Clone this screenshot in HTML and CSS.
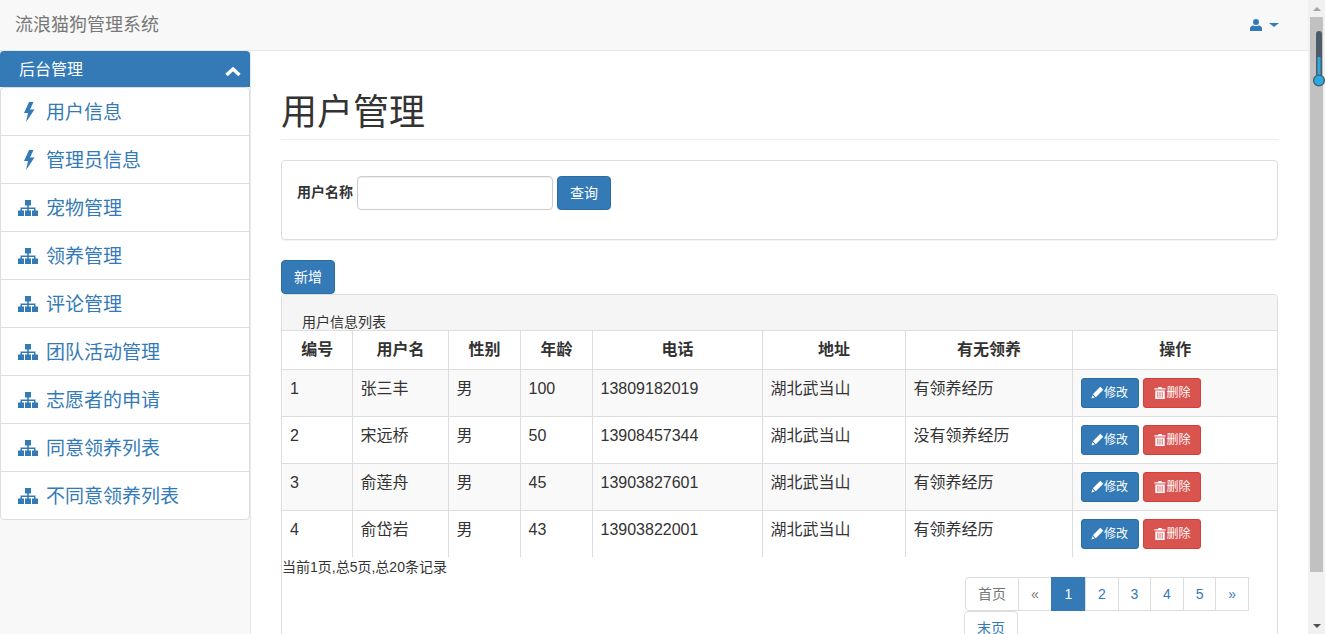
FILE: index.html
```html
<!DOCTYPE html>
<html lang="zh">
<head>
<meta charset="utf-8">
<title>流浪猫狗管理系统</title>
<link rel="stylesheet" href="styles.css">
</head>
<body>
<svg class="defs" width="0" height="0" aria-hidden="true">
  <symbol id="i-flash" viewBox="0 0 12 20"><path d="M6 0 1 11h4L3 20l8.500-12.500H7L10.500 0z"/></symbol>
  <symbol id="i-sitemap" viewBox="0 0 20 16"><path d="M7 0h6v5.500h-2.200v2H17.500V10.500H20V16h-6v-5.500h2V9H10.800v1.500H13V16H7v-5.500h2.200V9H4v1.500h2V16H0v-5.500h2.500V7.500h6.700v-2H7z"/></symbol>
  <symbol id="i-pencil" viewBox="0 0 14 14"><path d="M10 .8 13.200 4l-8 8L2 8.800z"/><path d="M.5 13.500 1.500 10l2.500 2.500z"/></symbol>
  <symbol id="i-trash" viewBox="0 0 14 14"><path d="M5 0h4v1.500h4.500V3H.5V1.500H5zM1.500 4h11v10h-11zM4 5.500V12.500h1V5.500zM6.500 5.500V12.500h1V5.500zM9 5.500V12.500h1V5.500z" fill-rule="evenodd"/></symbol>
</svg>
<div class="viewport">
  <div class="page">
    <header class="navbar">
      <a class="brand">流浪猫狗管理系统</a>
      <div class="user-menu">
        <svg class="user-icon" viewBox="0 0 12 12"><circle cx="6" cy="3" r="3"/><path d="M0 12V9.500C0 7.800 1.500 6.800 3.500 6.500 4.500 7.300 7.500 7.300 8.500 6.500 10.500 6.800 12 7.800 12 9.500V12z"/></svg>
        <span class="caret"></span>
      </div>
    </header>
    <div class="body-row">
      <aside class="sidebar">
        <div class="side-head">
          <span>后台管理</span>
          <svg class="chevron" viewBox="0 0 16 10"><path d="M1.500 8 8 2l6.500 6" fill="none" stroke="#fff" stroke-width="3.400"/></svg>
        </div>
        <ul class="side-list">
          <li><svg class="ic-flash"><use href="#i-flash"/></svg><a>用户信息</a></li>
          <li><svg class="ic-flash"><use href="#i-flash"/></svg><a>管理员信息</a></li>
          <li><svg class="ic-map"><use href="#i-sitemap"/></svg><a>宠物管理</a></li>
          <li><svg class="ic-map"><use href="#i-sitemap"/></svg><a>领养管理</a></li>
          <li><svg class="ic-map"><use href="#i-sitemap"/></svg><a>评论管理</a></li>
          <li><svg class="ic-map"><use href="#i-sitemap"/></svg><a>团队活动管理</a></li>
          <li><svg class="ic-map"><use href="#i-sitemap"/></svg><a>志愿者的申请</a></li>
          <li><svg class="ic-map"><use href="#i-sitemap"/></svg><a>同意领养列表</a></li>
          <li><svg class="ic-map"><use href="#i-sitemap"/></svg><a>不同意领养列表</a></li>
        </ul>
      </aside>
      <main class="content">
        <h1 class="title">用户管理</h1>
        <form class="search">
          <label class="search-label">用户名称</label>
          <input class="search-input" type="text">
          <button class="btn btn-primary btn-query" type="button">查询</button>
        </form>
        <button class="btn btn-primary btn-add" type="button">新增</button>
        <section class="panel">
          <div class="panel-head">用户信息列表</div>
          <table class="grid">
            <colgroup>
              <col class="c1"><col class="c2"><col class="c3"><col class="c4"><col class="c5"><col class="c6"><col class="c7"><col class="c8">
            </colgroup>
            <thead>
              <tr><th>编号</th><th>用户名</th><th>性别</th><th>年龄</th><th>电话</th><th>地址</th><th>有无领养</th><th>操作</th></tr>
            </thead>
            <tbody>
              <tr><td>1</td><td>张三丰</td><td>男</td><td>100</td><td>13809182019</td><td>湖北武当山</td><td>有领养经历</td><td class="ops"><a class="mini blue"><svg><use href="#i-pencil"/></svg>修改</a><a class="mini red"><svg><use href="#i-trash"/></svg>删除</a></td></tr>
              <tr><td>2</td><td>宋远桥</td><td>男</td><td>50</td><td>13908457344</td><td>湖北武当山</td><td>没有领养经历</td><td class="ops"><a class="mini blue"><svg><use href="#i-pencil"/></svg>修改</a><a class="mini red"><svg><use href="#i-trash"/></svg>删除</a></td></tr>
              <tr><td>3</td><td>俞莲舟</td><td>男</td><td>45</td><td>13903827601</td><td>湖北武当山</td><td>有领养经历</td><td class="ops"><a class="mini blue"><svg><use href="#i-pencil"/></svg>修改</a><a class="mini red"><svg><use href="#i-trash"/></svg>删除</a></td></tr>
              <tr><td>4</td><td>俞岱岩</td><td>男</td><td>43</td><td>13903822001</td><td>湖北武当山</td><td>有领养经历</td><td class="ops"><a class="mini blue"><svg><use href="#i-pencil"/></svg>修改</a><a class="mini red"><svg><use href="#i-trash"/></svg>删除</a></td></tr>
            </tbody>
          </table>
          <div class="summary">当前1页,总5页,总20条记录</div>
          <nav class="pager">
            <a class="pg pg-first muted">首页</a><a class="pg pg-prev muted">«</a><a class="pg active">1</a><a class="pg">2</a><a class="pg">3</a><a class="pg">4</a><a class="pg">5</a><a class="pg">»</a><a class="pg pg-last">末页</a>
          </nav>
        </section>
      </main>
    </div>
  </div>
  <div class="scrollbar">
    <span class="arrow-up"></span>
    <div class="thumb-track"><div class="thumb"></div></div>
    <span class="arrow-down"></span>
    <svg class="thermo" viewBox="0 0 12 56"><rect x="3" y="0" width="6" height="46" rx="3" fill="#4d5b66"/><rect x="4.500" y="26" width="3" height="22" fill="#29abe2"/><circle cx="6" cy="49.500" r="5.400" fill="#29abe2" stroke="#4d5b66" stroke-width="1.300"/></svg>
  </div>
</div>
</body>
</html>
```
FILE: styles.css
```css
* { box-sizing: border-box; }
html, body { margin: 0; height: 100%; overflow: hidden; }
body {
  font-family: "Liberation Sans", "Noto Sans CJK SC", sans-serif;
  font-size: 14px;
  line-height: 20px;
  color: #333;
  background: #fff;
}
.defs { position: absolute; }
a { text-decoration: none; }
.viewport { display: flex; width: 1325px; height: 634px; overflow: hidden; }
.page { width: 1308px; flex: none; height: 634px; overflow: hidden; display: flex; flex-direction: column; }

.navbar {
  height: 51px; flex: none;
  background: #f8f8f8;
  border-bottom: 1px solid #e7e7e7;
  display: flex; align-items: center; justify-content: space-between;
  padding: 0 29px 0 15px;
}
.brand { font-size: 18px; color: #777; }
.user-menu { display: flex; align-items: center; gap: 7px; }
.user-icon { width: 12px; height: 12px; fill: #337ab7; display: block; }
.caret { width: 0; height: 0; border-top: 4px solid #337ab7; border-left: 5px solid transparent; border-right: 5px solid transparent; }

.body-row { flex: 1; display: flex; min-height: 0; }
.sidebar { width: 251px; flex: none; background: #f8f8f8; border-right: 1px solid #e7e7e7; }
.side-head {
  width: 250px; height: 36px;
  background: #337ab7; color: #fff;
  border-radius: 4px 4px 0 0;
  font-size: 16px;
  display: flex; align-items: center; justify-content: space-between;
  padding: 0 9px 0 19px;
  margin-bottom: 1px;
}
.side-head span { margin-top: 1px; }
.chevron { width: 16px; height: 10px; display: block; margin-top: 6px; }
.side-list {
  list-style: none; margin: 0; padding: 0;
  width: 250px;
  background: #fff;
  border: 1px solid #ddd;
  border-radius: 4px;
  margin-top: -1px;
}
.side-list li {
  height: 48px;
  display: flex; align-items: center;
  border-top: 1px solid #ddd;
  font-size: 19px;
  padding-left: 17px;
}
.side-list li:first-child { border-top: 0; height: 47px; }
.side-list a { color: #337ab7; margin-top: 2px; }
.ic-flash { width: 12px; height: 20px; fill: #337ab7; margin: 0 11px 0 5px; flex: none; }
.ic-map { width: 20px; height: 16px; fill: #337ab7; margin-right: 8px; flex: none; }

.content { flex: 1; min-width: 0; padding: 0 30px; }
.title {
  margin: 37px 0 20px;
  height: 52px;
  font-size: 36px; line-height: 49px; font-weight: 400;
  color: #333;
  border-bottom: 1px solid #eee;
}
.search {
  height: 80px;
  border: 1px solid #ddd; border-radius: 4px;
  box-shadow: 0 1px 1px rgba(0,0,0,.05);
  padding: 15px;
  display: flex; align-items: flex-start;
  margin-bottom: 20px;
}
.search-label { font-size: 14px; font-weight: 700; margin-right: 4px; line-height: 32px; }
.search-input {
  width: 196px; height: 34px;
  border: 1px solid #ccc; border-radius: 4px;
  box-shadow: inset 0 1px 1px rgba(0,0,0,.075);
  margin-right: 4px;
  background: #fff;
}
.btn {
  display: block; height: 34px;
  font: 14px/20px "Liberation Sans", "Noto Sans CJK SC", sans-serif;
  border: 1px solid #2e6da4; border-radius: 4px;
  padding: 0 12px;
}
.btn-primary { background: #337ab7; color: #fff; }
.panel { position: relative; border: 1px solid #ddd; border-radius: 4px 4px 0 0; height: 400px; }
.panel-head {
  height: 36px;
  background: #f5f5f5;
  border-bottom: 1px solid #ddd;
  border-radius: 3px 3px 0 0;
  padding: 20px 20px 0;
  font-size: 14px; line-height: 15px;
}
.grid { border-collapse: collapse; table-layout: fixed; width: 995px; }
.c1 { width: 70px; } .c2 { width: 96px; } .c3 { width: 72px; } .c4 { width: 72px; }
.c5 { width: 170px; } .c6 { width: 143px; } .c7 { width: 167px; } .c8 { width: 205px; }
.grid th {
  height: 38px; padding: 0 0 0 1px;
  font-size: 16px; font-weight: 700; text-align: center;
  border-left: 1px solid #ddd; border-bottom: 1px solid #ddd;
}
.grid th:first-child, .grid td:first-child { border-left: 0; }
.grid td {
  height: 47px; padding: 8px;
  padding-bottom: 0;
  vertical-align: top;
  font-size: 16px;
  line-height: 22px;
  border-left: 1px solid #ddd; border-top: 1px solid #ddd;
}
.grid tbody tr:nth-child(odd) { background: #f9f9f9; }
.grid tbody tr:first-child td { border-top: 0; }
.ops { white-space: nowrap; }
.mini {
  display: inline-flex; align-items: center; justify-content: center;
  width: 58px; height: 30px;
  border-radius: 3px;
  color: #fff; font-size: 12px; line-height: 18px;
  vertical-align: top;
}
.mini svg { width: 13px; height: 13px; fill: #fff; flex: none; }
.mini.blue { background: #337ab7; border: 1px solid #2e6da4; margin-right: 4px; }
.mini.red { background: #d9534f; border: 1px solid #d43f3a; }
.mini.red svg { width: 12px; height: 12px; margin-left: 2px; }
.summary { font-size: 14px; line-height: 18px; padding-top: 1px; color: #333; }
.pager { position: absolute; left: 683px; top: 282px; width: 295px; display: flex; flex-wrap: wrap; }
.pg {
  display: block; height: 34px; width: 33.600px; margin-left: -1px;
  border: 1px solid #ddd; background: #fff; color: #337ab7;
  font-size: 14px; line-height: 32px; text-align: center;
}
.pg-first { width: 54px; border-radius: 4px 0 0 4px; margin-left: 0; }
.pg-prev { width: 34px; }
.pg.muted { color: #777; }
.pg.active { background: #337ab7; border-color: #337ab7; color: #fff; width: 35px; }
.pg-last { width: 54px; margin-left: -1px; border-radius: 4px 4px 0 0; }

.scrollbar { width: 17px; flex: none; height: 634px; background: #f1f1f1; position: relative; display: flex; flex-direction: column; }
.thumb-track { flex: 1; padding: 0 2px; }
.thumb { width: 13px; height: 555px; background: #c1c1c1; }
.arrow-up, .arrow-down { height: 17px; flex: none; display: flex; align-items: center; justify-content: center; }
.arrow-up::before { content: ""; border-bottom: 4px solid #a3a3a3; border-left: 4px solid transparent; border-right: 4px solid transparent; }
.arrow-down::before { content: ""; border-top: 4px solid #505050; border-left: 4px solid transparent; border-right: 4px solid transparent; }
.thermo { position: absolute; left: 5px; top: 31px; width: 12px; height: 56px; }
```
